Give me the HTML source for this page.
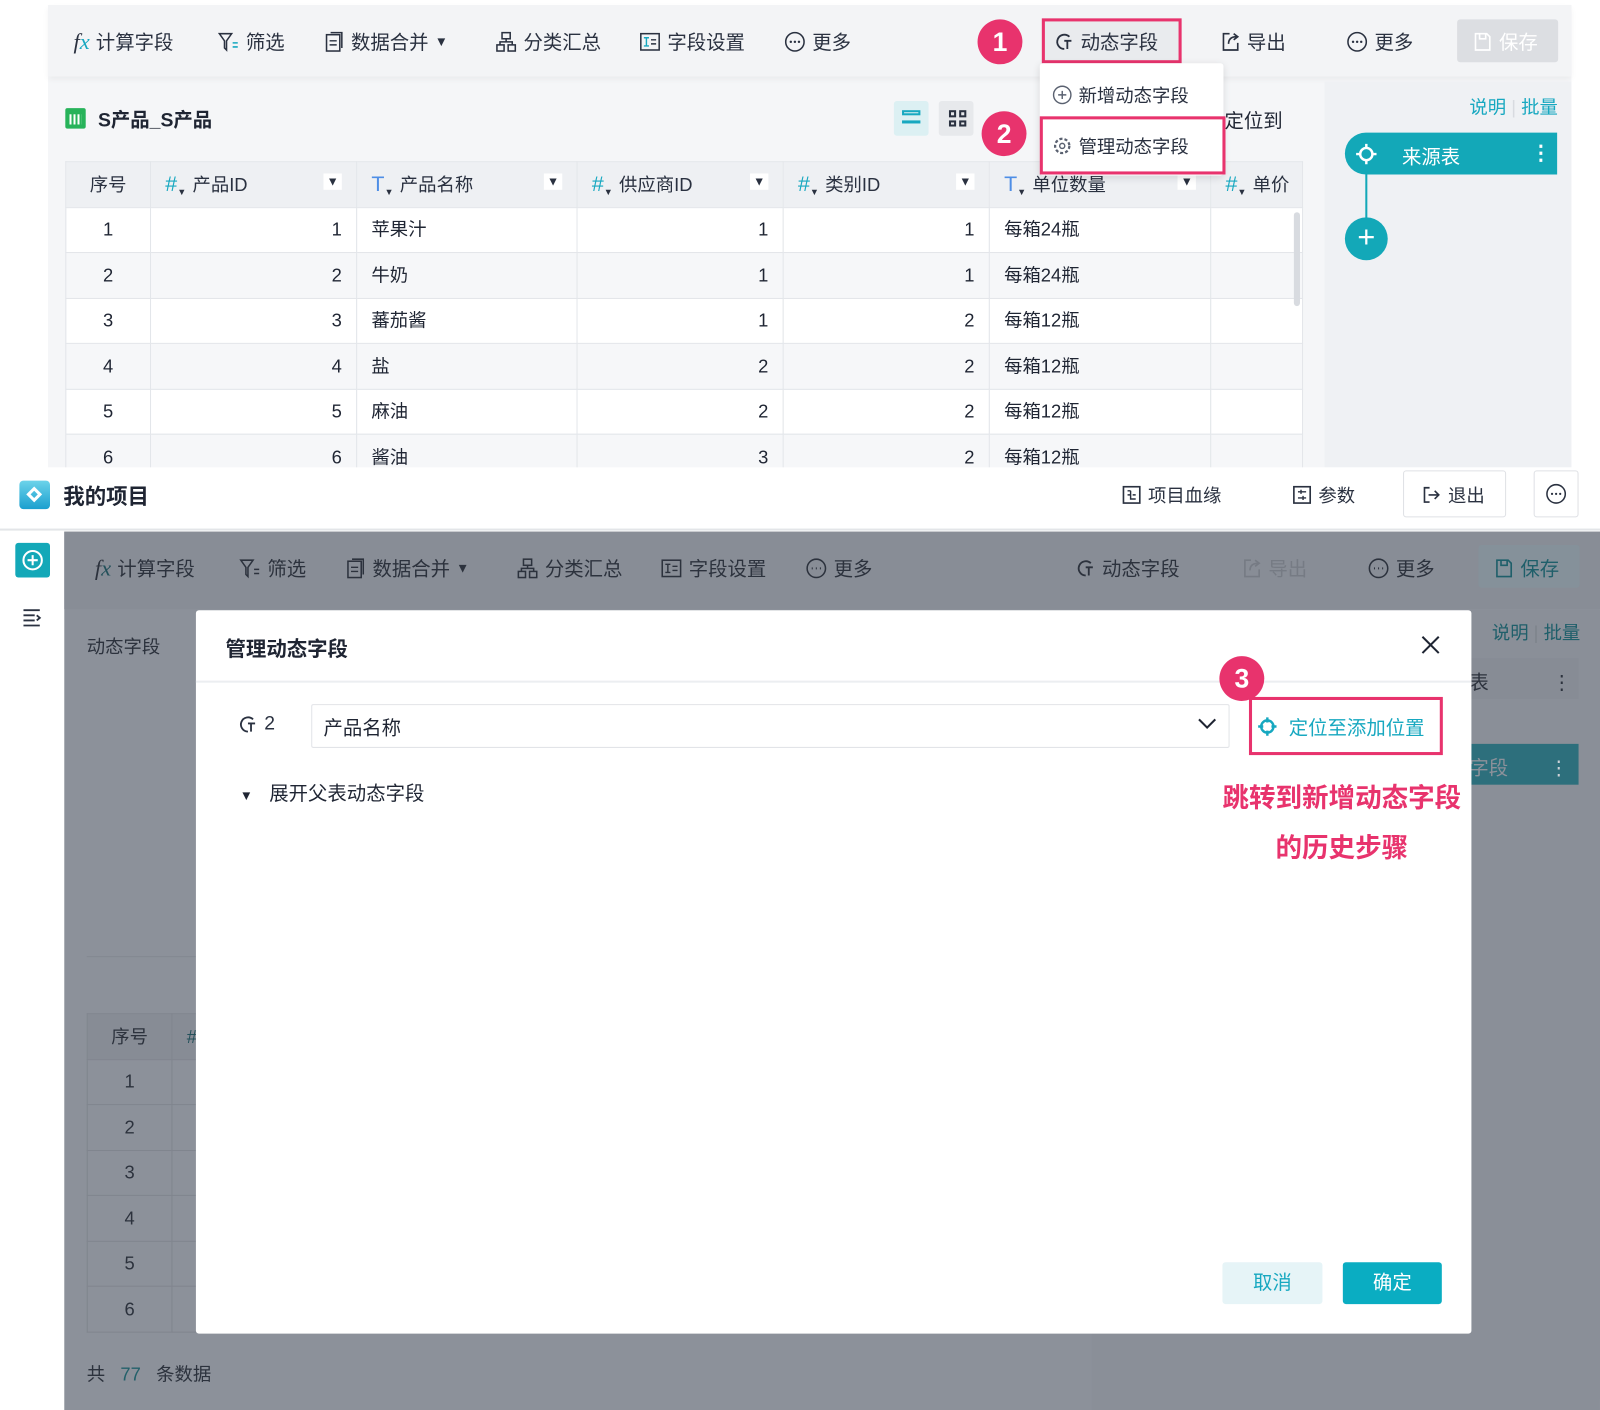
<!DOCTYPE html>
<html><head><meta charset="utf-8">
<style>
*{margin:0;padding:0;box-sizing:border-box}
body{width:1600px;height:1410px;overflow:hidden;background:#fff;font-family:"Liberation Sans","Noto Sans CJK SC",sans-serif;color:#1f2533}
#w{position:absolute;left:0;top:0;width:1568px;height:1382px;transform:scale(1.0204);transform-origin:0 0}
.a{position:absolute;white-space:nowrap}
.tb{font-size:19px;color:#2a3140;display:flex;align-items:center;gap:6px}
.tb svg{flex:none}
table{border-collapse:collapse;position:absolute;font-size:18px}
td{border:1px solid #e3e6ea;height:44.5px;padding:0 14px;white-space:nowrap;line-height:1;overflow:hidden}
.red{border:3px solid #e8336d}
.badge{position:absolute;width:44px;height:44px;border-radius:50%;background:#e8336d;color:#fff;font-size:26px;font-weight:bold;text-align:center;line-height:44px}
.dim{color:#2c323d}
.dim svg *{stroke:#2c323d}
sub{font-size:9px;vertical-align:-4px;margin-right:6px;line-height:0}
</style></head><body><div id="w">

<!-- TOP SCREENSHOT -->
<div class="a" style="left:47px;top:5px;width:1493px;height:453px;background:#f5f6f8"></div>
<div class="a" style="left:47px;top:5px;width:1493px;height:70px;background:#f3f4f6;box-shadow:0 3px 6px rgba(0,0,0,.05)"></div>
<div class="a" style="left:1298px;top:80px;width:242px;height:378px;background:#eff1f4"></div>

<div class="a tb" style="left:72px;top:27px"><i style="font-family:'Liberation Serif';font-size:22px">f<span style="color:#17a8c0">x</span></i>计算字段</div>
<div class="a tb" style="left:213px;top:27px"><svg width="22" height="22" viewBox="0 0 22 22"><path d="M2 3h12l-5 7v9l-2-2v-7z" fill="none" stroke="#2a3140" stroke-width="1.5"/><path d="M15 12h5M15 16h5" stroke="#17a8c0" stroke-width="1.5"/></svg>筛选</div>
<div class="a tb" style="left:318px;top:27px"><svg width="20" height="22" viewBox="0 0 20 22"><rect x="2" y="4" width="13" height="16" fill="none" stroke="#2a3140" stroke-width="1.5"/><path d="M6 2h11v15" fill="none" stroke="#2a3140" stroke-width="1.5"/><path d="M5 10h7M5 14h7" stroke="#2a3140" stroke-width="1.4"/></svg>数据合并 <span style="font-size:13px">▼</span></div>
<div class="a tb" style="left:485px;top:27px"><svg width="22" height="22" viewBox="0 0 22 22"><rect x="7" y="2" width="8" height="6" fill="none" stroke="#2a3140" stroke-width="1.5"/><rect x="2" y="14" width="7" height="6" fill="none" stroke="#2a3140" stroke-width="1.5"/><rect x="13" y="14" width="7" height="6" fill="none" stroke="#2a3140" stroke-width="1.5"/><path d="M11 8v3H5v3M11 11h6v3" fill="none" stroke="#2a3140" stroke-width="1.5"/></svg>分类汇总</div>
<div class="a tb" style="left:626px;top:27px"><svg width="22" height="22" viewBox="0 0 22 22"><rect x="2" y="3" width="18" height="16" fill="none" stroke="#2a3140" stroke-width="1.5"/><path d="M5 7h5M7.5 7v8M5 15h5" stroke="#17a8c0" stroke-width="1.4"/><path d="M12 9h5M12 13h5" stroke="#2a3140" stroke-width="1.4"/></svg>字段设置</div>
<div class="a tb" style="left:768px;top:27px"><svg width="22" height="22" viewBox="0 0 22 22"><circle cx="11" cy="11" r="9" fill="none" stroke="#2a3140" stroke-width="1.5"/><circle cx="7" cy="11" r="1.2" fill="#2a3140"/><circle cx="11" cy="11" r="1.2" fill="#2a3140"/><circle cx="15" cy="11" r="1.2" fill="#2a3140"/></svg>更多</div>

<div class="badge" style="left:958px;top:19px">1</div>
<div class="a red" style="left:1021px;top:18px;width:137px;height:44px;background:#e9ebee"></div>
<div class="a tb" style="left:1033px;top:27px"><svg width="20" height="22" viewBox="0 0 20 22"><path d="M15 6A7 7 0 1 0 10 18" fill="none" stroke="#2a3140" stroke-width="1.8"/><path d="M10 10h7M13 10v8" stroke="#2a3140" stroke-width="1.8"/></svg>动态字段</div>
<div class="a tb" style="left:1196px;top:27px"><svg width="20" height="22" viewBox="0 0 20 22"><path d="M9 3H3v16h14v-7" fill="none" stroke="#2a3140" stroke-width="1.6"/><path d="M8 13c0-5 3-7 8-7M13 3l4 3-4 3" fill="none" stroke="#2a3140" stroke-width="1.6"/></svg>导出</div>
<div class="a tb" style="left:1319px;top:27px"><svg width="22" height="22" viewBox="0 0 22 22"><circle cx="11" cy="11" r="9" fill="none" stroke="#2a3140" stroke-width="1.5"/><circle cx="7" cy="11" r="1.2" fill="#2a3140"/><circle cx="11" cy="11" r="1.2" fill="#2a3140"/><circle cx="15" cy="11" r="1.2" fill="#2a3140"/></svg>更多</div>
<div class="a" style="left:1428px;top:19px;width:99px;height:42px;background:#dcdee2;border-radius:3px"></div>
<div class="a tb" style="left:1443px;top:27px;color:#fff"><svg width="20" height="22" viewBox="0 0 20 22"><path d="M3 3h11l3 3v13H3z" fill="none" stroke="#fff" stroke-width="1.6"/><path d="M7 3v5h6V3" fill="none" stroke="#fff" stroke-width="1.6"/></svg>保存</div>

<div class="a" style="left:64px;top:106px;width:20px;height:20px;background:#27b35a;border-radius:2px"><div style="margin:6px 4px;width:12px;height:10px;background:repeating-linear-gradient(90deg,#fff 0 2px,transparent 2px 4px)"></div></div>
<div class="a" style="left:96px;top:103px;font-size:19px;font-weight:bold">S产品_S产品</div>
<div class="a" style="left:876px;top:99px;width:34px;height:34px;background:#dcf0f3;border-radius:3px"><div style="margin:9px 8px;width:18px;height:5px;border:2px solid #17a8c0"></div><div style="margin:-4px 8px;width:18px;height:4px;border-top:3px solid #17a8c0"></div></div>
<div class="a" style="left:920px;top:99px;width:34px;height:34px;background:#e7e9ec;border-radius:3px;display:grid;grid-template-columns:7px 7px;gap:3px;padding:9px 10px"><i style="border:2px solid #2a3140"></i><i style="border:2px solid #2a3140"></i><i style="border:2px solid #2a3140"></i><i style="border:2px solid #2a3140"></i></div>
<div class="a" style="left:1200px;top:104px;font-size:19px">定位到</div>

<table style="left:64px;top:158px;width:1213px;table-layout:fixed">
<tr style="background:#eef0f3;color:#2a3140"><td style="width:83px;text-align:center;height:44px">序号</td><td style="width:202px"><span style="color:#17a8c0;font-size:21px">#</span><sub>▼</sub>产品ID<span style="float:right;font-size:12px;background:#fff;padding:2px 3px">▼</span></td><td style="width:216px"><span style="color:#4e8ee6;font-size:21px">T</span><sub>▼</sub>产品名称<span style="float:right;font-size:12px;background:#fff;padding:2px 3px">▼</span></td><td style="width:202px"><span style="color:#17a8c0;font-size:21px">#</span><sub>▼</sub>供应商ID<span style="float:right;font-size:12px;background:#fff;padding:2px 3px">▼</span></td><td style="width:202px"><span style="color:#17a8c0;font-size:21px">#</span><sub>▼</sub>类别ID<span style="float:right;font-size:12px;background:#fff;padding:2px 3px">▼</span></td><td style="width:217px"><span style="color:#4e8ee6;font-size:21px">T</span><sub>▼</sub>单位数量<span style="float:right;font-size:12px;background:#fff;padding:2px 3px">▼</span></td><td><span style="color:#17a8c0;font-size:21px">#</span><sub>▼</sub>单价</td></tr>
<tr style="background:#fff"><td align="center">1</td><td align="right">1</td><td>苹果汁</td><td align="right">1</td><td align="right">1</td><td>每箱24瓶</td><td></td></tr>
<tr style="background:#f6f7f9"><td align="center">2</td><td align="right">2</td><td>牛奶</td><td align="right">1</td><td align="right">1</td><td>每箱24瓶</td><td></td></tr>
<tr style="background:#fff"><td align="center">3</td><td align="right">3</td><td>蕃茄酱</td><td align="right">1</td><td align="right">2</td><td>每箱12瓶</td><td></td></tr>
<tr style="background:#f6f7f9"><td align="center">4</td><td align="right">4</td><td>盐</td><td align="right">2</td><td align="right">2</td><td>每箱12瓶</td><td></td></tr>
<tr style="background:#fff"><td align="center">5</td><td align="right">5</td><td>麻油</td><td align="right">2</td><td align="right">2</td><td>每箱12瓶</td><td></td></tr>
<tr style="background:#f6f7f9"><td align="center">6</td><td align="right">6</td><td>酱油</td><td align="right">3</td><td align="right">2</td><td>每箱12瓶</td><td></td></tr>
</table>
<div class="a" style="left:1268px;top:208px;width:6px;height:92px;background:#d8dbe0;border-radius:3px"></div>

<!-- dropdown -->
<div class="a" style="left:1019px;top:62px;width:180px;height:110px;background:#fff;box-shadow:0 2px 8px rgba(0,0,0,.12);border-radius:3px"></div>
<div class="a tb" style="left:1031px;top:80px;font-size:18px"><svg width="20" height="20" viewBox="0 0 20 20"><circle cx="10" cy="10" r="8.5" fill="none" stroke="#5a6170" stroke-width="1.4"/><path d="M10 6v8M6 10h8" stroke="#5a6170" stroke-width="1.4"/></svg>新增动态字段</div>
<div class="badge" style="left:962px;top:109px">2</div>
<div class="a red" style="left:1019px;top:114px;width:182px;height:57px"></div>
<div class="a tb" style="left:1031px;top:130px;font-size:18px"><svg width="20" height="20" viewBox="0 0 20 20"><circle cx="10" cy="10" r="7" fill="none" stroke="#5a6170" stroke-width="2.2" stroke-dasharray="3 2"/><circle cx="10" cy="10" r="2.5" fill="none" stroke="#5a6170" stroke-width="1.4"/></svg>管理动态字段</div>

<div class="a" style="left:1440px;top:91px;font-size:18px;color:#17a8c0">说明 <span style="color:#d8dbe0">|</span> 批量</div>
<div class="a" style="left:1318px;top:130px;width:208px;height:41px;background:#13a8b8;border-radius:21px 0 0 21px"></div>
<div class="a" style="left:1328px;top:140px"><svg width="22" height="22" viewBox="0 0 22 22"><circle cx="11" cy="11" r="6" fill="none" stroke="#fff" stroke-width="2.4"/><path d="M11 1v5M11 16v5M1 11h5M16 11h5" stroke="#fff" stroke-width="2.4"/></svg></div>
<div class="a" style="left:1374px;top:139px;font-size:19px;color:#fff">来源表</div>
<div class="a" style="left:1500px;top:138px;font-size:20px;color:#fff;font-weight:bold">⋮</div>
<div class="a" style="left:1338px;top:171px;width:2px;height:45px;background:#13a8b8"></div>
<div class="a" style="left:1318px;top:213px;width:42px;height:42px;border-radius:50%;background:#13a8b8;color:#fff;font-size:30px;text-align:center;line-height:40px">+</div>

<!-- BOTTOM SCREENSHOT -->
<div class="a" style="left:0;top:458px;width:1568px;height:62px;background:#fff;border-bottom:2px solid #e3e5e8"></div>
<div class="a" style="left:19px;top:471px;width:30px;height:28px;border-radius:4px;background:linear-gradient(#6cd3ea,#1a9fcf)"><div style="margin:8px 9px;width:11px;height:11px;border:3px solid #fff;transform:rotate(45deg)"></div></div>
<div class="a" style="left:62px;top:471px;font-size:21px;font-weight:bold">我的项目</div>
<div class="a tb" style="left:1099px;top:472px;font-size:18px"><svg width="20" height="20" viewBox="0 0 20 20"><rect x="2" y="2" width="16" height="16" fill="none" stroke="#2a3140" stroke-width="1.6"/><path d="M6 6h3M6 10h3M11 10h3M11 14h3M9 6v8h2" fill="none" stroke="#2a3140" stroke-width="1.4"/></svg> 项目血缘</div>
<div class="a tb" style="left:1266px;top:472px;font-size:18px"><svg width="20" height="20" viewBox="0 0 20 20"><rect x="2" y="2" width="16" height="16" fill="none" stroke="#2a3140" stroke-width="1.6"/><path d="M6 7h8M6 13h8M9 5v4M11 11v4" stroke="#2a3140" stroke-width="1.4"/></svg> 参数</div>
<div class="a" style="left:1375px;top:461px;width:101px;height:46px;border:1px solid #dfe1e5;border-radius:3px"></div>
<div class="a tb" style="left:1393px;top:472px;font-size:18px"><svg width="20" height="20" viewBox="0 0 20 20"><path d="M8 3H3v14h5" fill="none" stroke="#2a3140" stroke-width="1.6"/><path d="M7 10h10M13 6l4 4-4 4" fill="none" stroke="#2a3140" stroke-width="1.6"/></svg> 退出</div>
<div class="a" style="left:1503px;top:461px;width:44px;height:46px;border:1px solid #dfe1e5;border-radius:3px"></div>
<div class="a" style="left:1514px;top:473px"><svg width="22" height="22" viewBox="0 0 22 22"><circle cx="11" cy="11" r="9" fill="none" stroke="#2a3140" stroke-width="1.5"/><circle cx="7" cy="11" r="1.1" fill="#2a3140"/><circle cx="11" cy="11" r="1.1" fill="#2a3140"/><circle cx="15" cy="11" r="1.1" fill="#2a3140"/></svg></div>

<div class="a" style="left:15px;top:532px;width:34px;height:34px;background:#13a8b8;border-radius:3px"><svg width="34" height="34" viewBox="0 0 34 34"><circle cx="17" cy="17" r="9" fill="none" stroke="#fff" stroke-width="2"/><path d="M17 12v10M12 17h10" stroke="#fff" stroke-width="2"/></svg></div>
<div class="a" style="left:22px;top:596px"><svg width="20" height="18" viewBox="0 0 20 18"><path d="M1 2h16M1 7h11M1 12h11M1 17h16M14 7l3 2.5-3 2.5" fill="none" stroke="#2a3140" stroke-width="1.8"/></svg></div>

<!-- dimmed app -->
<div class="a" style="left:63px;top:521px;width:1505px;height:861px;background:#8c919a;border-radius:0 0 14px 0"></div>
<div class="a" style="left:1070px;top:598px;width:498px;height:784px;background:#8a8f98"></div>
<div class="a" style="left:63px;top:521px;width:1505px;height:76px;background:#888d96"></div>
<div class="a tb dim" style="left:93px;top:543px"><i style="font-family:'Liberation Serif';font-size:22px">f<span style="color:#23505a">x</span></i>计算字段</div>
<div class="a tb dim" style="left:234px;top:543px"><svg width="22" height="22" viewBox="0 0 22 22"><path d="M2 3h12l-5 7v9l-2-2v-7z" fill="none" stroke-width="1.5"/><path d="M15 12h5M15 16h5" stroke-width="1.5"/></svg>筛选</div>
<div class="a tb dim" style="left:339px;top:543px"><svg width="20" height="22" viewBox="0 0 20 22"><rect x="2" y="4" width="13" height="16" fill="none" stroke-width="1.5"/><path d="M6 2h11v15" fill="none" stroke-width="1.5"/><path d="M5 10h7M5 14h7" stroke-width="1.4"/></svg>数据合并 <span style="font-size:13px">▼</span></div>
<div class="a tb dim" style="left:506px;top:543px"><svg width="22" height="22" viewBox="0 0 22 22"><rect x="7" y="2" width="8" height="6" fill="none" stroke-width="1.5"/><rect x="2" y="14" width="7" height="6" fill="none" stroke-width="1.5"/><rect x="13" y="14" width="7" height="6" fill="none" stroke-width="1.5"/><path d="M11 8v3H5v3M11 11h6v3" fill="none" stroke-width="1.5"/></svg>分类汇总</div>
<div class="a tb dim" style="left:647px;top:543px"><svg width="22" height="22" viewBox="0 0 22 22"><rect x="2" y="3" width="18" height="16" fill="none" stroke-width="1.5"/><path d="M5 7h5M7.5 7v8M5 15h5M12 9h5M12 13h5" stroke-width="1.4"/></svg>字段设置</div>
<div class="a tb dim" style="left:789px;top:543px"><svg width="22" height="22" viewBox="0 0 22 22"><circle cx="11" cy="11" r="9" fill="none" stroke-width="1.5"/><path d="M6.5 11h1M10.5 11h1M14.5 11h1" stroke-width="2"/></svg>更多</div>
<div class="a tb dim" style="left:1054px;top:543px"><svg width="20" height="22" viewBox="0 0 20 22"><path d="M15 6A7 7 0 1 0 10 18" fill="none" stroke-width="1.8"/><path d="M10 10h7M13 10v8" stroke-width="1.8"/></svg>动态字段</div>
<div class="a tb" style="left:1217px;top:543px;color:#767b84"><svg width="20" height="22" viewBox="0 0 20 22"><path d="M9 3H3v16h14v-7" fill="none" stroke="#767b84" stroke-width="1.6"/><path d="M8 13c0-5 3-7 8-7M13 3l4 3-4 3" fill="none" stroke="#767b84" stroke-width="1.6"/></svg>导出</div>
<div class="a tb dim" style="left:1340px;top:543px"><svg width="22" height="22" viewBox="0 0 22 22"><circle cx="11" cy="11" r="9" fill="none" stroke-width="1.5"/><path d="M6.5 11h1M10.5 11h1M14.5 11h1" stroke-width="2"/></svg>更多</div>
<div class="a" style="left:1449px;top:534px;width:99px;height:42px;background:#85919a;border-radius:3px"></div>
<div class="a tb" style="left:1464px;top:543px;color:#1f5f6a"><svg width="20" height="22" viewBox="0 0 20 22"><path d="M3 3h11l3 3v13H3z" fill="none" stroke="#1f5f6a" stroke-width="1.6"/><path d="M7 3v5h6V3" fill="none" stroke="#1f5f6a" stroke-width="1.6"/></svg>保存</div>
<div class="a" style="left:85px;top:620px;font-size:18px;color:#2c323d">动态字段</div>
<div class="a" style="left:1462px;top:606px;font-size:18px;color:#1f5f6a">说明 <span style="color:#7d838c">|</span> 批量</div>
<div class="a" style="left:1442px;top:645px;width:105px;height:40px;background:#878c95"></div>
<div class="a" style="left:1440px;top:654px;font-size:19px;color:#2c323d">表<span style="margin-left:62px">⋮</span></div>
<div class="a" style="left:1442px;top:729px;width:105px;height:40px;background:#2d6f7c"></div>
<div class="a" style="left:1440px;top:738px;font-size:19px;color:#8c919a">字段<span style="margin-left:40px;color:#cfd3d8">⋮</span></div>
<div class="a" style="left:85px;top:937px;width:110px;height:1px;background:#838891"></div>
<table style="left:85px;top:993px;width:130px;color:#2c323d;font-size:18px;table-layout:fixed">
<tr style="background:#878c95"><td style="border-color:#80858e;text-align:center;width:83px">序号</td><td style="border-color:#80858e;color:#23505a">#</td></tr>
<tr><td style="border-color:#80858e;text-align:center">1</td><td style="border-color:#80858e"></td></tr>
<tr><td style="border-color:#80858e;text-align:center">2</td><td style="border-color:#80858e"></td></tr>
<tr><td style="border-color:#80858e;text-align:center">3</td><td style="border-color:#80858e"></td></tr>
<tr><td style="border-color:#80858e;text-align:center">4</td><td style="border-color:#80858e"></td></tr>
<tr><td style="border-color:#80858e;text-align:center">5</td><td style="border-color:#80858e"></td></tr>
<tr><td style="border-color:#80858e;text-align:center">6</td><td style="border-color:#80858e"></td></tr>
</table>
<div class="a" style="left:85px;top:1333px;font-size:18px;color:#2c323d">共 <span style="color:#23606a;margin:0 10px">77</span> 条数据</div>

<!-- modal -->
<div class="a" style="left:192px;top:598px;width:1250px;height:709px;background:#fff;border-radius:3px"></div>
<div class="a" style="left:192px;top:667px;width:1250px;height:2px;background:#eceef1"></div>
<div class="a" style="left:221px;top:620px;font-size:20px;font-weight:bold">管理动态字段</div>
<div class="a" style="left:1390px;top:620px"><svg width="24" height="24" viewBox="0 0 24 24"><path d="M4 4l16 16M20 4L4 20" stroke="#1f2533" stroke-width="2"/></svg></div>
<div class="a tb" style="left:233px;top:699px;font-size:19px"><svg width="20" height="22" viewBox="0 0 20 22"><path d="M15 6A7 7 0 1 0 10 18" fill="none" stroke="#2a3140" stroke-width="1.8"/><path d="M10 10h7M13 10v8" stroke="#2a3140" stroke-width="1.8"/></svg> 2</div>
<div class="a" style="left:305px;top:690px;width:900px;height:43px;border:1px solid #e2e4e8;border-radius:2px"></div>
<div class="a" style="left:317px;top:699px;font-size:19px">产品名称</div>
<div class="a" style="left:1173px;top:702px"><svg width="20" height="14" viewBox="0 0 20 14"><path d="M2 3l8 8 8-8" fill="none" stroke="#1f2533" stroke-width="2"/></svg></div>
<div class="a" style="left:235px;top:763px;font-size:19px"><span style="font-size:13px;margin-right:16px">▼</span>展开父表动态字段</div>
<div class="badge" style="left:1195px;top:643px">3</div>
<div class="a red" style="left:1224px;top:683px;width:190px;height:57px"></div>
<div class="a" style="left:1231px;top:701px"><svg width="22" height="22" viewBox="0 0 22 22"><circle cx="11" cy="11" r="6" fill="none" stroke="#17a8c0" stroke-width="2.4"/><path d="M11 2v5M11 15v5M2 11h5M15 11h5" stroke="#17a8c0" stroke-width="2.4"/></svg></div>
<div class="a" style="left:1263px;top:699px;font-size:19px;color:#17a8c0">定位至添加位置</div>
<div class="a" style="left:1188px;top:758px;width:254px;text-align:center;font-size:26px;font-weight:bold;color:#e8336d;line-height:49px;white-space:normal">跳转到新增动态字段<br>的历史步骤</div>
<div class="a" style="left:1198px;top:1237px;width:98px;height:41px;background:#e6f4f7;border-radius:3px;text-align:center;line-height:41px;font-size:19px;color:#17a8c0">取消</div>
<div class="a" style="left:1316px;top:1237px;width:97px;height:41px;background:#0aadc2;border-radius:3px;text-align:center;line-height:41px;font-size:19px;color:#fff">确定</div>
</div></body></html>
